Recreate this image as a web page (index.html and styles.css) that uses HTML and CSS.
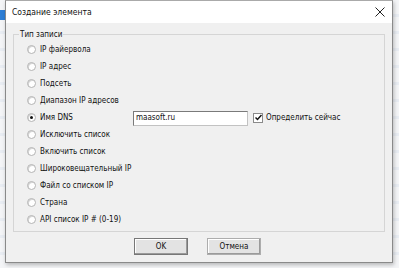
FILE: index.html
```html
<!DOCTYPE html>
<html>
<head>
<meta charset="utf-8">
<link rel="stylesheet" href="styles.css">
</head>
<body>
<div class="desk">
  <div class="sel"></div>
  <div class="dialog">
    <div class="titlebar">
      <span class="title">Создание элемента</span>
      <svg class="close" width="10" height="10" viewBox="0 0 10 10"><path d="M0.5 0.5 L9.5 9.5 M9.5 0.5 L0.5 9.5" stroke="#222" stroke-width="1"/></svg>
    </div>
    <div class="body">
      <div class="group">
        <span class="legend">Тип записи</span>
        <div class="row"><span class="radio"></span><span class="lbl">IP файервола</span></div>
        <div class="row"><span class="radio"></span><span class="lbl">IP адрес</span></div>
        <div class="row"><span class="radio"></span><span class="lbl">Подсеть</span></div>
        <div class="row"><span class="radio"></span><span class="lbl">Диапазон IP адресов</span></div>
        <div class="row dns"><span class="radio on"></span><span class="lbl">Имя DNS</span>
          <span class="field">maasoft.ru</span>
          <span class="check"><svg width="7" height="7" viewBox="0 0 7 7"><path d="M0.5 3.5 L2.5 5.5 L6.5 1" stroke="#111" stroke-width="1.5" fill="none"/></svg></span>
          <span class="clbl">Определить сейчас</span>
        </div>
        <div class="row"><span class="radio"></span><span class="lbl">Исключить список</span></div>
        <div class="row"><span class="radio"></span><span class="lbl">Включить список</span></div>
        <div class="row"><span class="radio"></span><span class="lbl">Широковещательный IP</span></div>
        <div class="row"><span class="radio"></span><span class="lbl">Файл со списком IP</span></div>
        <div class="row"><span class="radio"></span><span class="lbl">Страна</span></div>
        <div class="row"><span class="radio"></span><span class="lbl">API список IP # (0-19)</span></div>
      </div>
      <div class="buttons">
        <button class="btn def">OK</button>
        <button class="btn">Отмена</button>
      </div>
    </div>
  </div>
</div>
</body>
</html>
```
FILE: styles.css
```css
html, body { margin: 0; padding: 0; }
body {
  width: 399px; height: 268px; overflow: hidden;
  font-family: "DejaVu Sans Condensed", "DejaVu Sans", sans-serif;
  font-size: 8px; color: #111;
}
.desk {
  position: relative; width: 399px; height: 268px;
  background: repeating-linear-gradient(to bottom, #f4f5f7 0, #f4f5f7 14px, #e9edf3 14px, #e9edf3 17px);
}
.sel { position: absolute; left: 0; top: 10px; width: 5px; height: 10px; background: #2e7fd6; }
.dialog {
  position: absolute; left: 5px; top: 0; width: 386px; height: 261px;
  border: 1px solid #8a8a8a; border-top-color: #aaa;
  background: #f0f0f0;
  box-shadow: 1px 2px 4px rgba(0,0,0,0.25);
  display: flex; flex-direction: column;
}
.titlebar {
  height: 22px; background: #fff; display: flex; align-items: center;
  justify-content: space-between; padding: 0 7px 0 6px;
}
.title { font-size: 8.5px; color: #111; }
.body { flex: 1; padding: 11px 7px 0 7px; display: flex; flex-direction: column; }
.group {
  position: relative; border: 1px solid #d5d5d5; height: 190px;
  padding: 6px 0 0 13px;
}
.legend {
  position: absolute; left: 5px; top: -6px; background: #f0f0f0; padding: 0 1px;
  line-height: 11px;
}
.row { height: 17px; display: flex; align-items: center; }
.radio {
  width: 7px; height: 7px; border: 1px solid #b4b4b4; border-radius: 50%;
  background: #fff; box-sizing: content-box; position: relative; flex: none;
  box-shadow: inset 1px 1px 0 #d4d4d4;
}
.radio.on::after {
  content: ""; position: absolute; left: 2px; top: 2px; width: 3px; height: 3px;
  border-radius: 50%; background: #111;
}
.lbl { margin-left: 4px; }
.dns .lbl { width: 93px; }
.field {
  width: 111px; height: 13px; border: 1px solid #c2c2c2; border-top-color: #7a7a7a; border-left-color: #7a7a7a;
  background: #fff; padding-left: 2px; line-height: 12px; margin-top: 1px;
}
.check {
  margin-left: 5px; width: 8px; height: 8px; border: 1px solid #8a8a8a; background: #fff;
  display: flex; align-items: center; justify-content: center;
}
.clbl { margin-left: 3px; }
.buttons { display: flex; gap: 19px; padding-left: 121px; margin-top: 6px; }
.btn {
  width: 54px; height: 17px; padding: 0; margin: 0;
  font-family: "DejaVu Sans Condensed", "DejaVu Sans", sans-serif; font-size: 8px; color: #111;
  background: #e3e3e3; border: 1px solid #adadad;
  box-shadow: inset -1px -1px 0 #9a9a9a, inset 1px 1px 0 #fff;
}
.btn.def { border-color: #777; }
```
